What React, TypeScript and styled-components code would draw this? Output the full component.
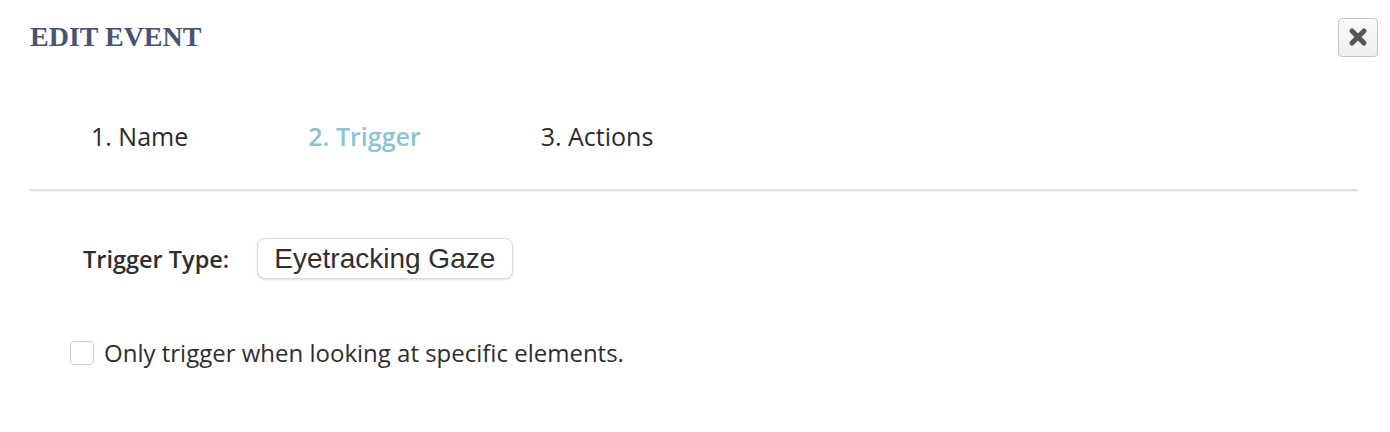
import React from "react";
import styled, { createGlobalStyle } from "styled-components";

const Global = createGlobalStyle`
  html, body { margin: 0; padding: 0; background: #ffffff; }
  body { font-family: "Open Sans", "Noto Sans", sans-serif; color: #333333; }
`;

const Page = styled.div`
  padding: 18px 12px 0 30px;
`;

const Header = styled.div`
  display: flex;
  align-items: center;
  justify-content: space-between;
  height: 38px;
`;

const Title = styled.h1`
  margin: 0;
  font-family: "Liberation Serif", "Times New Roman", serif;
  font-weight: 700;
  font-size: 28px;
  line-height: 1;
  color: #485373;
`;

const CloseButton = styled.button`
  width: 40px;
  height: 39px;
  padding: 0;
  display: flex;
  align-items: center;
  justify-content: center;
  border: 1px solid #c4c4c4;
  border-radius: 4px;
  background: linear-gradient(#f9f9f9, #efefef);
  cursor: pointer;
`;

const Tabs = styled.nav`
  display: flex;
  margin: 64px 20px 0 0;
  padding-bottom: 36px;
  border-bottom: 2px solid #e2e2e2;
  box-shadow: 0 1px 0 #f3f3f3;
`;

const Tab = styled.span<{ $active?: boolean }>`
  padding: 0 59px 0 61px;
  font-size: 25px;
  line-height: 33px;
  color: ${(p) => (p.$active ? "#8cc3d3" : "#2b2b2b")};
  font-weight: ${(p) => (p.$active ? 600 : 400)};
`;

const TriggerRow = styled.div`
  display: flex;
  align-items: center;
  gap: 28px;
  margin-top: 47px;
  padding-left: 53px;
`;

const Label = styled.span`
  font-size: 23.5px;
  font-weight: 600;
  color: #2e2e2e;
`;

const SelectButton = styled.button`
  height: 41px;
  padding: 0 17px 0 16px;
  border: 1px solid #d8d8d8;
  border-radius: 8px;
  background: #ffffff;
  box-shadow: 0 1px 2px rgba(0, 0, 0, 0.12);
  font-family: "Liberation Sans", Arial, sans-serif;
  font-size: 28px;
  color: #2f2f2f;
  cursor: pointer;
`;

const CheckRow = styled.label`
  display: flex;
  align-items: center;
  gap: 10px;
  margin-top: 57px;
  padding-left: 40px;
  cursor: pointer;
`;

const CheckBox = styled.span`
  width: 22px;
  height: 22px;
  border: 1px solid #cfcfcf;
  border-radius: 4px;
  background: #ffffff;
  box-shadow: inset 0 1px 1px rgba(0, 0, 0, 0.04);
`;

const CheckText = styled.span`
  font-size: 24px;
  color: #2e2e2e;
`;

const CloseIcon = () => (
  <svg width="20" height="20" viewBox="0 0 20 20">
    <path
      d="M4 4 L16 16 M16 4 L4 16"
      stroke="#555555"
      strokeWidth="5"
      strokeLinecap="round"
    />
  </svg>
);

export default function App() {
  return (
    <>
      <Global />
      <Page>
        <Header>
          <Title>EDIT EVENT</Title>
          <CloseButton aria-label="Close">
            <CloseIcon />
          </CloseButton>
        </Header>
        <Tabs>
          <Tab>1. Name</Tab>
          <Tab $active>2. Trigger</Tab>
          <Tab>3. Actions</Tab>
        </Tabs>
        <TriggerRow>
          <Label>Trigger Type:</Label>
          <SelectButton>Eyetracking Gaze</SelectButton>
        </TriggerRow>
        <CheckRow>
          <CheckBox />
          <CheckText>Only trigger when looking at specific elements.</CheckText>
        </CheckRow>
      </Page>
    </>
  );
}
